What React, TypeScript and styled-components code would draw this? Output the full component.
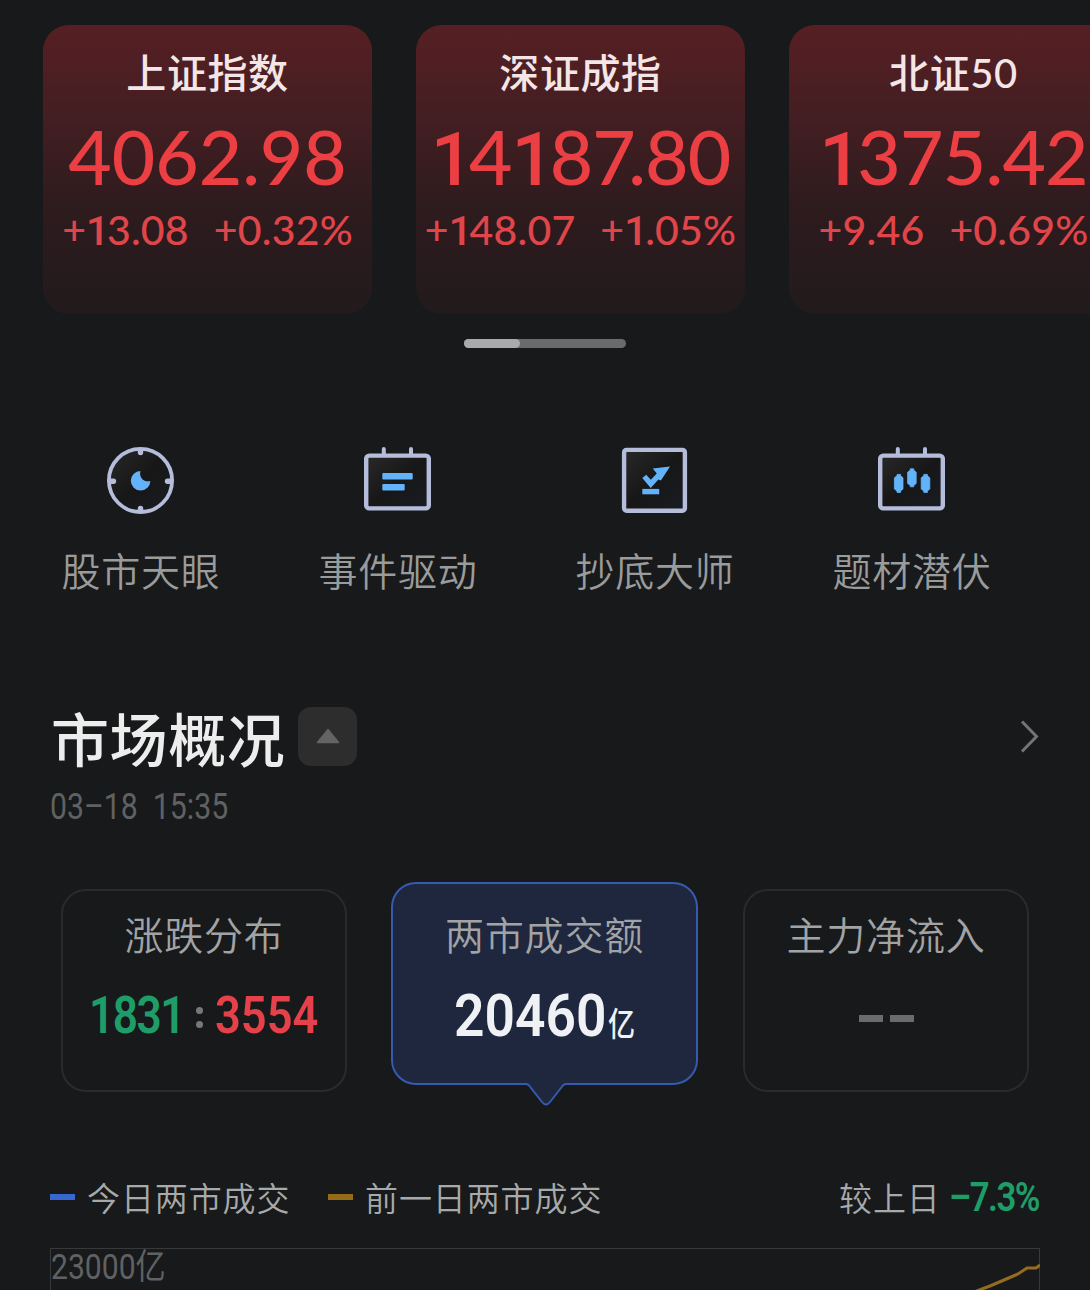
import React from 'react';
import styled, { createGlobalStyle } from 'styled-components';

const cjk = '"Noto Sans CJK SC", sans-serif';

const GlobalStyle = createGlobalStyle`
  * { box-sizing: border-box; }
  html, body { margin: 0; background: #17191a; }
  body { font-family: ${cjk}; overflow: hidden; }
`;

const Page = styled.main`
  width: 1090px;
  height: 1290px;
  overflow: hidden;
  background: #17191a;
  display: flex;
  flex-direction: column;
`;

const Indices = styled.section`
  display: flex;
  flex: none;
  gap: 44px;
  padding: 25px 0 0 43px;
  overflow: hidden;
`;

const IndexCard = styled.article`
  flex: 0 0 329px;
  height: 289px;
  border-radius: 26px;
  background: linear-gradient(180deg, #561f23 0%, #431e22 33%, #2e1b1e 63%, #221a1c 100%);
  display: flex;
  flex-direction: column;
  align-items: center;
  white-space: nowrap;
`;

const IndexName = styled.h2`
  margin: 19px 0 0;
  height: 58px;
  font: 500 40px/58px Lato, ${cjk};
  letter-spacing: 0.6px;
  color: #f4e6e7;
`;

const Figure = styled.span<{ $size: number; $weight?: number; $squeeze?: number; $track?: number; $family?: string }>`
  display: inline-block;
  font-family: ${p => p.$family ?? 'Roboto'}, ${cjk};
  font-size: ${p => p.$size}px;
  font-weight: ${p => p.$weight ?? 400};
  letter-spacing: ${p => p.$track ?? 0}px;
  transform: scaleX(${p => p.$squeeze ?? 1});
  transform-origin: left center;
  white-space: nowrap;
`;

const One = styled.span`
  font-family: Roboto, sans-serif;
  font-weight: 500;
  line-height: 0;
  letter-spacing: -0.06em;
`;

const Seven = styled.span`
  letter-spacing: -0.1em;
`;

const IndexValue = styled.div`
  height: 90px;
  line-height: 90px;
  margin-top: 9px;
  color: #ec3f43;
`;

const IndexChange = styled.div`
  display: flex;
  gap: 25px;
  height: 50px;
  line-height: 50px;
  margin-top: 4px;
  color: #e04549;
`;

const Scroller = styled.div`
  flex: none;
  width: 162px;
  height: 9px;
  margin: 25px 0 0 464px;
  border-radius: 5px;
  background: #6b6b6b;
`;

const Thumb = styled.div`
  width: 56px;
  height: 9px;
  border-radius: 5px;
  background: #aaa;
`;

const Tools = styled.nav`
  flex: none;
  display: grid;
  grid-template-columns: repeat(4, 257px);
  padding: 92px 0 0 12px;
`;

const Tool = styled.div`
  display: flex;
  flex-direction: column;
  align-items: center;
  svg { display: block; }
`;

const ToolLabel = styled.span`
  margin-top: 12px;
  padding-left: 1px;
  height: 58px;
  font-size: 39px;
  line-height: 58px;
  letter-spacing: 0.8px;
  font-weight: 350;
  color: #9a9b9b;
`;

const Heading = styled.header`
  flex: none;
  display: flex;
  align-items: center;
  height: 84px;
  margin-top: 98px;
  padding: 0 49px 0 51px;
`;

const Title = styled.h1`
  margin: -2px 0 0;
  width: 247px;
  font-size: 58px;
  line-height: 84px;
  letter-spacing: 0.6px;
  font-weight: 500;
  color: #ededed;
`;

const Toggle = styled.button`
  width: 59px;
  height: 59px;
  margin: 0 auto 4px 0;
  padding: 0;
  border: 0;
  border-radius: 13px;
  background: #2d2d2d;
  display: grid;
  place-items: center;
`;

const Stamp = styled.div`
  flex: none;
  height: 50px;
  margin-top: 2px;
  padding-left: 50px;
  line-height: 50px;
  color: #606162;
`;

const Stats = styled.section`
  flex: none;
  display: flex;
  align-items: flex-start;
  justify-content: space-between;
  height: 223px;
  margin-top: 50px;
  padding: 0 61px;
`;

const StatCard = styled.article<{ $active?: boolean }>`
  position: relative;
  width: ${p => (p.$active ? 307 : 286)}px;
  height: 203px;
  margin-top: ${p => (p.$active ? 0 : 7)}px;
  margin-right: ${p => (p.$active ? 1 : 0)}px;
  padding-top: ${p => (p.$active ? 20 : 13)}px;
  border: 2px solid ${p => (p.$active ? '#355ab0' : '#2a2b2c')};
  border-radius: 25px;
  background: ${p => (p.$active ? '#1e273d' : 'transparent')};
  display: flex;
  flex-direction: column;
  align-items: center;
`;

const StatLabel = styled.h3`
  margin: 0;
  height: 58px;
  font-size: 39px;
  line-height: 58px;
  letter-spacing: 0.8px;
  font-weight: 350;
  color: #a2a3a4;
`;

const StatValue = styled.div<{ $width: number }>`
  display: flex;
  align-items: baseline;
  justify-content: space-between;
  width: ${p => p.$width}px;
  height: 66px;
  margin-top: 21px;
  line-height: 66px;
`;

const Slot = styled.span<{ $w: number; $color: string }>`
  width: ${p => p.$w}px;
  color: ${p => p.$color};
  white-space: nowrap;
`;

const Colon = styled.span`
  display: flex;
  flex-direction: column;
  gap: 7px;
  align-self: center;
  margin-top: 3px;
  &::before, &::after {
    content: '';
    width: 7px;
    height: 7px;
    border-radius: 50%;
    background: #77787a;
  }
`;

const Dashes = styled.div`
  display: flex;
  gap: 7px;
  margin-top: 53px;
  &::before, &::after {
    content: '';
    width: 24px;
    height: 7px;
    background: #6a6b6d;
  }
`;

const Pointer = styled.svg`
  position: absolute;
  left: 132px;
  bottom: -25px;
`;

const Legend = styled.div`
  flex: none;
  display: flex;
  align-items: center;
  height: 50px;
  margin-top: 67px;
  padding: 0 50px;
  font-size: 33px;
  line-height: 50px;
  letter-spacing: 0.9px;
  font-weight: 350;
  color: #a8a9aa;
  white-space: nowrap;
`;

const Swatch = styled.i<{ $color: string }>`
  width: 25px;
  height: 6px;
  margin: 0 12px 0 0;
  background: ${p => p.$color};
`;

const LegendName = styled.span<{ $w: number }>`
  width: ${p => p.$w}px;
`;

const Compare = styled.span`
  margin-left: auto;
  width: 110px;
`;

const Chart = styled.section`
  flex: none;
  display: flex;
  justify-content: space-between;
  width: 990px;
  height: 100px;
  margin: 26px 0 0 50px;
  border: 1px solid #38393a;
  line-height: 37px;
  color: #606162;
  svg { display: block; margin-right: -1px; }
`;

const frame = { fill: 'url(#panel)', stroke: '#b5bddb', strokeWidth: 4.4 };
const blue = '#63b3fb';

const calendar = (
  <>
    <path d="M19.8 3v6M47 3v6" stroke="#b5bddb" strokeWidth="4" strokeLinecap="round" />
    <rect x="2.2" y="9.6" width="62.6" height="52.8" rx="3" {...frame} />
  </>
);

const Icons = [
  <>
    <circle cx="33.5" cy="34.4" r="31.6" {...frame} strokeWidth="3.8" />
    <path d="M33.5 4.5v2M33.5 62.5v2M3.5 35.2h3M60.5 35.2h3" stroke="#b5bddb" strokeWidth="5.4" strokeLinecap="round" />
    <path d="M33.4 25A9.8 9.8 0 1 0 43.4 35C39.5 36 36.5 34.8 34.8 32.5C33 30 32.8 27.5 33.4 25Z" fill={blue} />
  </>,
  <>
    {calendar}
    <rect x="18.3" y="27" width="30.4" height="6.6" rx="1" fill={blue} />
    <rect x="18.3" y="38" width="22.4" height="6.4" rx="1" fill={blue} />
  </>,
  <>
    <rect x="3.1" y="3.9" width="60.8" height="60.8" rx="2.5" {...frame} />
    <path d="M21.3 32 25.2 28.8 29.8 33.8 35.8 27.6 31.8 22.4 49 20.4 39.9 34.6 37.4 33.4 29.7 42Z" fill={blue} />
    <rect x="21.3" y="42.9" width="16.9" height="5.4" fill={blue} />
  </>,
  <>
    {calendar}
    <path
      d="M19 28.4h3.6v1.4l2.4 2v11.2l-2.4 2v1.4H19V45l-2.6-2V31.8l2.6-2ZM32.2 22.8h3.6v1.4l2.4 2v11.2l-2.4 2v1.4h-3.6v-1.4l-2.6-2V26.2l2.6-2ZM45.8 28.4h3.6v1.4l2.4 2v11.2l-2.4 2v1.4h-3.6V45l-2.6-2V31.8l2.6-2Z"
      fill={blue}
      stroke={blue}
      strokeWidth="0.8"
    />
  </>,
];

const tools = ['股市天眼', '事件驱动', '抄底大师', '题材潜伏'];

const indices = [
  { name: '上证指数', value: '4062.98', track: 0, delta: '+13.08', rate: '+0.32%' },
  { name: '深证成指', value: '14187.80', track: -0.9, delta: '+148.07', rate: '+1.05%' },
  { name: '北证50', value: '1375.42', track: -0.8, delta: '+9.46', rate: '+0.69%' },
];

/* Proportional digits: a footless, narrower 1 and a 7 tucked over the decimal point. */
function Digits({ text }: { text: string }) {
  return (
    <>
      {[...text].map((c, n) => {
        if (c === '1') return <One key={n}>1</One>;
        if (c === '7' && text[n + 1] === '.') return <Seven key={n}>7</Seven>;
        return c;
      })}
    </>
  );
}

export default function App() {
  return (
    <Page>
      <GlobalStyle />
      <Indices>
        {indices.map(i => (
          <IndexCard key={i.name}>
            <IndexName>{i.name}</IndexName>
            <IndexValue>
              <Figure $family="Lato" $size={75} $weight={500} $track={i.track}><Digits text={i.value} /></Figure>
            </IndexValue>
            <IndexChange>
              <Figure $family="Lato" $size={41} $weight={500} $track={0.2}><Digits text={i.delta} /></Figure>
              <Figure $family="Lato" $size={41} $weight={500} $track={0.2}><Digits text={i.rate} /></Figure>
            </IndexChange>
          </IndexCard>
        ))}
      </Indices>
      <Scroller><Thumb /></Scroller>

      <Tools>
        {tools.map((name, n) => (
          <Tool key={name}>
            <svg width="67" height="88" viewBox="0 -6 67 88" fill="none">
              <defs>
                <linearGradient id="panel" x1="0" y1="0" x2="1" y2="1">
                  <stop stopColor="#292929" />
                  <stop offset="0.5" stopColor="#171717" />
                  <stop offset="1" stopColor="#191c23" />
                </linearGradient>
              </defs>
              {Icons[n]}
            </svg>
            <ToolLabel>{name}</ToolLabel>
          </Tool>
        ))}
      </Tools>

      <Heading>
        <Title>市场概况</Title>
        <Toggle aria-label="收起">
          <svg width="24" height="16" viewBox="0 0 24 16">
            <path d="M12 1.5 22.5 14.5H1.5Z" fill="#646464" stroke="#646464" strokeWidth="1.5" strokeLinejoin="round" />
          </svg>
        </Toggle>
        <svg width="24" height="38" viewBox="0 0 24 38" fill="none">
          <path d="M5 2.5 19.5 17.5 5 32.5" stroke="#737475" strokeWidth="3" />
        </svg>
      </Heading>
      <Stamp><Figure $size={36} $squeeze={0.84}>03–18&nbsp; 15:35</Figure></Stamp>

      <Stats>
        <StatCard>
          <StatLabel>涨跌分布</StatLabel>
          <StatValue $width={230}>
            <Slot $w={94} $color="#1f9d68"><Figure $size={52} $weight={600} $squeeze={0.85} $track={-1.8}>1831</Figure></Slot>
            <Colon />
            <Slot $w={104} $color="#e4414a"><Figure $size={52} $weight={600} $squeeze={0.87}>3554</Figure></Slot>
          </StatValue>
        </StatCard>
        <StatCard $active>
          <StatLabel>两市成交额</StatLabel>
          <StatValue $width={182}>
            <Slot $w={153} $color="#eff1f5"><Figure $size={60} $weight={600} $squeeze={0.89}>20460</Figure></Slot>
            <Slot $w={28} $color="#eff1f5"><Figure $size={33} $weight={500} $squeeze={0.82}>亿</Figure></Slot>
          </StatValue>
          <Pointer width="42" height="27" viewBox="0 0 42 27" fill="none">
            <path d="M0 0H42V3H40Q38 3 37 5L25 21Q21 26 17 21L5 5Q4 3 2 3H0Z" fill="#1e273d" />
            <path d="M0 3H1Q3 3 4.5 5L17 21Q21 26 25 21L37.5 5Q39 3 41 3H42" stroke="#355ab0" strokeWidth="2" />
          </Pointer>
        </StatCard>
        <StatCard>
          <StatLabel>主力净流入</StatLabel>
          <Dashes />
        </StatCard>
      </Stats>

      <Legend>
        <Swatch $color="#3867d0" />
        <LegendName $w={241}>今日两市成交</LegendName>
        <Swatch $color="#966b18" />
        <LegendName $w={240}>前一日两市成交</LegendName>
        <Compare>较上日</Compare>
        <Slot $w={91} $color="#1f9d68"><Figure $size={41} $weight={600} $squeeze={0.85} $track={-1.8}>–7.3%</Figure></Slot>
      </Legend>
      <Chart>
        <Figure $size={35} $squeeze={0.86}>23000亿</Figure>
        <svg width="66" height="44" viewBox="0 0 66 44" fill="none">
          <path d="M0 43 16 37 30 31 44 25 53 19H62L66 16" stroke="#946b20" strokeWidth="3" />
        </svg>
      </Chart>
    </Page>
  );
}
